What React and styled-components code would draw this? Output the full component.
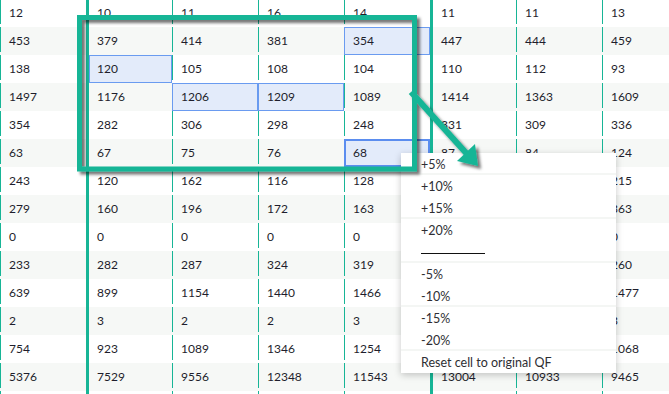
import React from "react";
import styled, { createGlobalStyle } from "styled-components";

const teal = "#17b596";

const GlobalStyle = createGlobalStyle`
  body {
    margin: 0;
    background: #fff;
    font-family: Lato, "Open Sans", sans-serif;
    overflow: hidden;
  }
`;

const Page = styled.div`
  position: relative;
  width: 669px;
  height: 394px;
  overflow: hidden;
`;

const Table = styled.div`
  display: flex;
  flex-direction: column;
  margin-top: -1px;
`;

const Row = styled.div`
  display: flex;
  height: 28px;
  background: ${(p) => (p.$shaded ? "#f6f8f6" : "#fff")};
`;

const Cell = styled.div`
  box-sizing: border-box;
  flex: 0 0 86px;
  height: 28px;
  display: flex;
  align-items: center;
  padding: 0 0 2px ${(p) => (p.$group ? "8px" : "9px")};
  font-size: 12px;
  color: #1e1e2c;
  border-left: ${(p) => (p.$group ? `3px solid ${teal}` : "none")};
  background-image: ${(p) =>
    p.$group ? "none" : `linear-gradient(${teal}, ${teal})`};
  background-size: 1px 25px;
  background-repeat: no-repeat;
  background-position: left top;
  ${(p) =>
    p.$state === "sel" &&
    `
    background-color: #e3ebfa;
    box-shadow: inset 0 0 0 1px #6a9bf0;
  `}
  ${(p) =>
    p.$state === "active" &&
    `
    background-color: #e3ebfa;
    box-shadow: inset 0 0 0 2px #5b8def;
  `}
`;

const Menu = styled.ul`
  position: absolute;
  left: 401px;
  top: 153px;
  width: 215px;
  margin: 0;
  padding: 0;
  list-style: none;
  background: #fff;
  box-shadow: 0 2px 7px rgba(0, 0, 0, 0.22);
`;

const Item = styled.li`
  box-sizing: border-box;
  height: 22px;
  display: flex;
  align-items: center;
  padding-left: 20px;
  font-size: 12.5px;
  color: #2e2e33;
  &:nth-child(odd) {
    box-shadow: inset 0 -2px 0 #f4f6f4;
  }
`;

const Rule = styled.span`
  display: block;
  width: 64px;
  border-top: 1px solid #111;
  margin-top: 2px;
`;

const Overlay = styled.svg`
  position: absolute;
  left: 0;
  top: 0;
  pointer-events: none;
`;

// cells under the context menu are left empty, the last row is only peeking in
const rows = [
  [12, 10, 11, 16, 14, 11, 11, 13],
  [453, 379, 414, 381, 354, 447, 444, 459],
  [138, 120, 105, 108, 104, 110, 112, 93],
  [1497, 1176, 1206, 1209, 1089, 1414, 1363, 1609],
  [354, 282, 306, 298, 248, 331, 309, 336],
  [63, 67, 75, 76, 68, 87, 84, 124],
  [243, 120, 162, 116, 128, "", "", 215],
  [279, 160, 196, 172, 163, "", "", 363],
  [0, 0, 0, 0, 0, "", "", 0],
  [233, 282, 287, 324, 319, "", "", 260],
  [639, 899, 1154, 1440, 1466, "", "", 1477],
  [2, 3, 2, 2, 3, "", "", 3],
  [754, 923, 1089, 1346, 1254, "", "", 1068],
  [5376, 7529, 9556, 12348, 11543, 13004, 10933, 9465],
  ["", "", "", "", "", "", "", ""],
];

const selection = {
  "1-4": "sel",
  "2-1": "sel",
  "3-2": "sel",
  "3-3": "sel",
  "5-4": "active",
};

const menuItems = ["+5%", "+10%", "+15%", "+20%", null, "-5%", "-10%", "-15%", "-20%", "Reset cell to original QF"];

const Annotation = () => (
  <Overlay width="669" height="394" viewBox="0 0 669 394">
    <defs>
      <filter id="shadow" x="-10%" y="-10%" width="130%" height="130%">
        <feDropShadow dx="3" dy="3" stdDeviation="1.4" floodColor="#000" floodOpacity="0.55" />
      </filter>
    </defs>
    <g filter="url(#shadow)">
      <rect x="79.5" y="17.5" width="335" height="151.5" fill="none" stroke={teal} strokeWidth="5" />
      <line x1="411" y1="92" x2="467" y2="154" stroke={teal} strokeWidth="6" />
      <polygon points="478,166 457,161 475,144" fill={teal} />
    </g>
  </Overlay>
);

const App = () => {
  return (
    <Page>
      <GlobalStyle />
      <Table>
        {rows.map((row, r) => (
          <Row key={r} $shaded={r % 2 === 1}>
            {row.map((v, c) => (
              <Cell key={c} $group={c === 1 || c === 5} $state={selection[`${r}-${c}`]}>
                {v}
              </Cell>
            ))}
          </Row>
        ))}
      </Table>
      <Menu>
        {menuItems.map((m, i) => (
          <Item key={i}>{m ? m : <Rule />}</Item>
        ))}
      </Menu>
      <Annotation />
    </Page>
  );
};

export default App;
